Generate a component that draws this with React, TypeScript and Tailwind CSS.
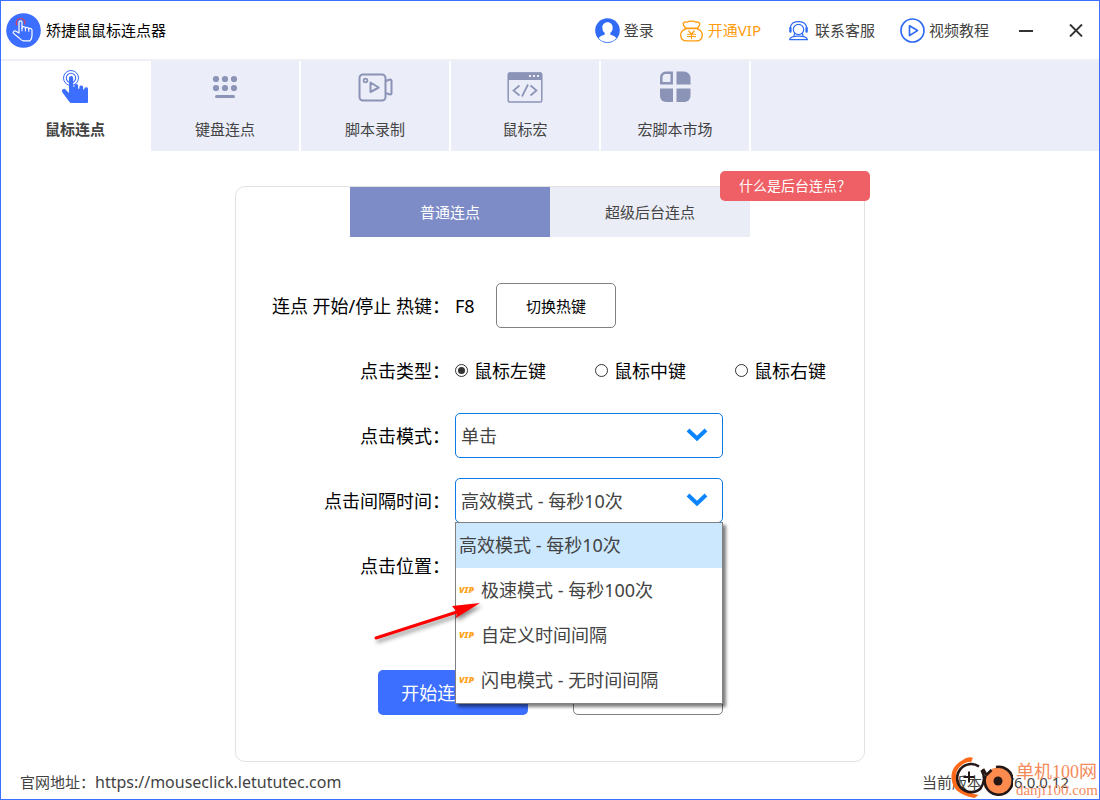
import { useState } from 'react';
import type { ReactNode } from 'react';

type TabKey = 'mouse' | 'keyboard' | 'record' | 'macro' | 'market';

interface Option {
  value: string;
  label: string;
  vip: boolean;
}

const intervalOptions: Option[] = [
  { value: 'normal', label: '高效模式 - 每秒10次', vip: false },
  { value: 'fast', label: '极速模式 - 每秒100次', vip: true },
  { value: 'custom', label: '自定义时间间隔', vip: true },
  { value: 'flash', label: '闪电模式 - 无时间间隔', vip: true },
];

const clickTypes = [
  { value: 'left', label: '鼠标左键' },
  { value: 'middle', label: '鼠标中键' },
  { value: 'right', label: '鼠标右键' },
];

function LogoIcon() {
  return (
    <svg viewBox="0 0 35 35" className="h-[35px] w-[35px]" fill="none">
      <circle cx="17.5" cy="17.5" r="17.3" fill="#3c6eff" />
      <path d="M11.2 12.4a4.300 4.300 0 1 1 7.400-1" stroke="#e0405a" strokeWidth="1.200" />
      <path
        d="M13 20V9.300a1.500 1.500 0 0 1 3 0v6.200q0-1.800 1.700-1.800t1.700 1.900q.2-1.300 1.700-1.200t1.700 1.800q.3-1 1.600-.8t1.600 1.600v5.500q0 3.300-2 5.300h-6.500q-2.500-.4-4.300-2.800l-5.700-4.600q-.8-1.200.2-2t2.300-.1z"
        stroke="#fff"
        strokeWidth="1.200"
        strokeLinecap="round"
        strokeLinejoin="round"
      />
      <path d="M16 15.500V18M19.400 15.600V18M22.800 16.200V18.500" stroke="#fff" strokeWidth="1" strokeLinecap="round" />
    </svg>
  );
}

function UserIcon() {
  return (
    <svg viewBox="0 0 25 25" className="h-[25px] w-[25px]">
      <circle cx="12.5" cy="12.5" r="12.3" fill="#2f6bf5" />
      <path
        d="M12.5 4.200c3.200 0 5.200 2.400 5.200 5.500 0 2.300-1 4.100-2.400 5.300v.9c0 .6.500.9 1.600 1.300 2.200.8 3.800 1.500 4.400 3a12 12 0 0 1-17.600 0c.6-1.500 2.200-2.200 4.400-3 1.100-.4 1.600-.7 1.600-1.300V15A7 7 0 0 1 7.300 9.700c0-3.100 2-5.500 5.200-5.500z"
        fill="#fff"
      />
    </svg>
  );
}

function MoneyIcon() {
  return (
    <svg viewBox="0 0 25 25" className="h-[25px] w-[25px]" fill="none" stroke="#ff9c0d" strokeWidth="1.300" strokeLinecap="round" strokeLinejoin="round">
      <path d="M6.500 10C5.200 8.600 4 7 4.200 5.200Q6 3.400 8.600 4.200Q10 2.500 12.500 3.300Q15 2.500 16.400 4.200Q19.200 3.400 20.800 5.400C21 7 19.800 8.600 18.500 10" />
      <path d="M6.200 10.400h12.600" strokeWidth="1.600" />
      <path d="M6.300 11.200C3.600 12.200 1.700 14.200 1.700 17c0 4 2.800 5.900 6.300 5.900h9c3.500 0 6.300-1.900 6.300-5.900 0-2.800-1.900-4.800-4.600-5.800" />
      <path d="M9.700 13l2.800 3 2.800-3M8.500 16.300h8M8.500 18.500h8M12.500 16v4.600" strokeWidth="1.100" />
    </svg>
  );
}

function ServiceIcon() {
  return (
    <svg viewBox="0 0 25 25" className="h-[25px] w-[25px]" fill="none" stroke="#2f6bf5" strokeWidth="1.200" strokeLinecap="round">
      <path d="M4.500 8.500C5.500 5.300 8.500 3.600 12.500 3.600s7 1.700 8 4.900" />
      <circle cx="12.500" cy="11.500" r="5.200" />
      <path d="M4.400 10v3.600M20.600 10v3.600" strokeWidth="2.400" />
      <path d="M8.800 15.300l-.8 2.200M16.200 15.300l.8 2.200" />
      <path d="M3.600 21.600c.4-2.400 3.300-3.500 8.900-3.500s8.500 1.100 8.900 3.500z" strokeLinejoin="round" />
    </svg>
  );
}

function PlayIcon() {
  return (
    <svg viewBox="0 0 25 25" className="h-[25px] w-[25px]" fill="none" stroke="#2f6bf5" strokeWidth="1.700" strokeLinejoin="round">
      <circle cx="12.500" cy="12.500" r="11.500" />
      <path d="M9.500 7.800l8 4.800-8 4.900z" />
    </svg>
  );
}

function TapIcon() {
  return (
    <svg viewBox="0 0 36 36" className="h-9 w-9" fill="none">
      <circle cx="14" cy="9" r="7.500" stroke="#3c6eff" strokeWidth="1" />
      <circle cx="14" cy="9" r="4.700" stroke="#3c6eff" strokeWidth="1.100" />
      <path
        d="M12 9.200a2.100 2.100 0 0 1 4.200 0v8.600h1.200v-1.300a1.900 1.900 0 0 1 3.700 0v3.300h1.300v-1.900a1.900 1.900 0 0 1 3.700 0v2.700h1.200v-.8a1.900 1.900 0 0 1 3.700 0V33a1 1 0 0 1-1 1H14.500q-1.500 0-2.200-1.300L5.300 23.300a2.100 2.100 0 0 1 3.600-2.400l3.100 3z"
        fill="#3c6eff"
      />
    </svg>
  );
}

function KeyboardIcon() {
  return (
    <svg viewBox="0 0 36 36" className="h-9 w-9" fill="#8b94b6">
      {[9, 18, 27].map((cx) => (
        <g key={cx}>
          <circle cx={cx} cy="10" r="3.100" />
          <circle cx={cx} cy="19" r="3.100" />
        </g>
      ))}
      <rect x="8" y="26" width="20" height="3" rx="1.500" />
    </svg>
  );
}

function RecordIcon() {
  return (
    <svg viewBox="0 0 36 36" className="h-9 w-9" fill="none" stroke="#8b94b6" strokeWidth="2" strokeLinejoin="round">
      <rect x="2.500" y="5.500" width="26" height="26" rx="3.500" />
      <path d="M28.500 12l4.500-1.500q1.500 0 1.500 1.500v12q0 1.500-1.500 1.500L28.500 24" />
      <circle cx="8.500" cy="11.500" r="1.900" strokeWidth="1.700" />
      <path d="M13.500 13.500v9.500l8.200-4.500z" />
    </svg>
  );
}

function MacroIcon() {
  return (
    <svg viewBox="0 0 36 36" className="h-9 w-9" fill="none" stroke="#8b94b6" strokeWidth="1.500">
      <rect x="1.200" y="4" width="33.600" height="29" rx="1.500" />
      <path d="M1 5a1.500 1.500 0 0 1 1.500-1.500h31A1.500 1.500 0 0 1 35 5v6H1z" fill="#8b94b6" stroke="none" />
      <path d="M12.500 16.500l-6 5 6 5M23.500 16.500l6 5-6 5M21 15.500l-6 12" strokeWidth="1.700" />
      <path d="M22 7h2M26 7h2M30 7h2" stroke="#ebedf9" strokeWidth="2" />
    </svg>
  );
}

function MarketIcon() {
  return (
    <svg viewBox="0 0 36 36" className="h-9 w-9" fill="#8b94b6">
      <path d="M8.500 3.800h6.200v10.400H4.300V8a4.200 4.200 0 0 1 4.200-4.200z" fill="none" stroke="#8b94b6" strokeWidth="2.500" />
      <path d="M19.500 2.500H27a6.500 6.500 0 0 1 6.500 6.500v6.500h-14z" />
      <path d="M3 19.500h13V33H9a6 6 0 0 1-6-6z" />
      <path d="M19.500 19.500h14V27a6 6 0 0 1-6 6h-8z" />
    </svg>
  );
}

function ChevronIcon() {
  return (
    <svg viewBox="0 0 22 14" className="pointer-events-none absolute top-[15px] right-[15px] h-[14px] w-[22px]" fill="none">
      <path d="M2 2l9 8.500L20 2" stroke="#0a84ff" strokeWidth="4" />
    </svg>
  );
}

const tabs: { key: TabKey; label: string; icon: ReactNode }[] = [
  { key: 'mouse', label: '鼠标连点', icon: <TapIcon /> },
  { key: 'keyboard', label: '键盘连点', icon: <KeyboardIcon /> },
  { key: 'record', label: '脚本录制', icon: <RecordIcon /> },
  { key: 'macro', label: '鼠标宏', icon: <MacroIcon /> },
  { key: 'market', label: '宏脚本市场', icon: <MarketIcon /> },
];

function HeaderLink({ icon, text, vip }: { icon: ReactNode; text: string; vip?: boolean }) {
  return (
    <a href="#" className={`flex items-center gap-1 ${vip ? 'text-[#ff9c0d]' : 'text-[#434343]'}`}>
      {icon}
      <span>{text}</span>
    </a>
  );
}

function Header() {
  return (
    <header className="flex h-[60px] items-center border-b-2 border-[#efeff6] pl-[5px]">
      <LogoIcon />
      <h1 className="ml-[5px] text-black">矫捷鼠鼠标连点器</h1>
      <nav className="ml-auto flex items-center gap-[25px]">
        <HeaderLink icon={<UserIcon />} text="登录" />
        <HeaderLink icon={<MoneyIcon />} text="开通VIP" vip />
        <HeaderLink icon={<ServiceIcon />} text="联系客服" />
        <HeaderLink icon={<PlayIcon />} text="视频教程" />
      </nav>
      <div className="ml-[14px] flex gap-1">
        <button aria-label="最小化" className="flex h-10 w-[46px] items-center justify-center">
          <svg viewBox="0 0 14 14" className="h-[14px] w-[14px]" stroke="#333" strokeWidth="2">
            <path d="M0 8h14" />
          </svg>
        </button>
        <button aria-label="关闭" className="flex h-10 w-[46px] items-center justify-center">
          <svg viewBox="0 0 14 14" className="h-[14px] w-[14px]" stroke="#333" strokeWidth="1.800">
            <path d="M1 1.500l12 12M13 1.500L1 13.500" />
          </svg>
        </button>
      </div>
    </header>
  );
}

function Row({ label, htmlFor, children }: { label: string; htmlFor?: string; children?: ReactNode }) {
  return (
    <div className="flex h-[45px] items-center gap-[5px]">
      <label htmlFor={htmlFor} className="w-[214px] shrink-0 text-right">
        {label}
      </label>
      {children}
    </div>
  );
}

function Watermark() {
  return (
    <div className="pointer-events-none absolute right-px bottom-0 flex items-end gap-[3px] text-[#f58a5a]">
      <svg viewBox="0 0 64 43" className="h-[43px] w-[64px]" fill="none">
        <path d="M22 1.500C9 4 2 12 2.500 22c.5 10 7 17 23 20l4-3C14 36 7.500 31 7 22 6.500 13 12 7 23 5z" fill="#ff6a1a" />
        <path d="M13 4.500Q19-.5 24 2l-2.500 4.500q-4-2.500-8.500-2z" fill="#ff6a1a" />
        <path d="M30 10.500a14 14 0 1 0 1.500 22q3-4 3.500-9.500 0-5-2.500-9" stroke="#241715" strokeWidth="2.600" />
        <path d="M20 15.500v11M14.500 21h11" stroke="#241715" strokeWidth="2" />
        <circle cx="49" cy="25" r="13.500" fill="#fd8b4d" />
        <path d="M47 11a14 14 0 1 1-10.500 9M34 13l3.500 6 5-5" stroke="#241715" strokeWidth="2.600" />
        <circle cx="49" cy="25" r="4.500" fill="#241715" />
      </svg>
      <div className="font-['Liberation_Serif','Noto_Sans_CJK_SC',serif]">
        <div className="text-[18px] leading-[18px]">单机100网</div>
        <div className="text-[15px] leading-[18px]">danji100.com</div>
      </div>
    </div>
  );
}

export default function App() {
  const [activeTab, setActiveTab] = useState<TabKey>('mouse');
  const [clickType, setClickType] = useState('left');
  const [interval, setInterval] = useState('normal');
  const [menuOpen, setMenuOpen] = useState(true);

  const current = intervalOptions.find((o) => o.value === interval);

  const selectInterval = (value: string) => {
    setInterval(value);
    setMenuOpen(false);
  };

  return (
    <div className="relative flex min-h-screen flex-col border border-[#3c6eff] bg-white font-['Noto_Sans','Noto_Sans_CJK_SC',sans-serif] text-[15px] leading-5 text-[#434343]">
      <Header />

      <nav className="flex h-[90px] gap-[2px]">
        {tabs.map((tab) => (
          <button
            key={tab.key}
            onClick={() => setActiveTab(tab.key)}
            className={`flex w-[148px] flex-col items-center gap-[14px] pt-2 ${
              tab.key === activeTab ? 'bg-white font-bold' : 'bg-[#ebedf9]'
            }`}
          >
            {tab.icon}
            <span>{tab.label}</span>
          </button>
        ))}
        <div className="flex-1 bg-[#ebedf9]" />
      </nav>

      <main className="flex-1 pt-[35px]">
        <section className="relative mx-auto w-[630px] rounded-[10px] border border-[#e2e2e2] pb-[46px]">
          <div className="flex justify-center">
            <button className="h-[50px] w-[200px] bg-[#7d8bc6] text-white">普通连点</button>
            <button className="h-[50px] w-[200px] bg-[#ebedf6]">超级后台连点</button>
          </div>
          <button className="absolute -top-4 -right-[6px] h-[30px] w-[150px] rounded-[5px] bg-[#ee6065] text-sm text-white">
            什么是后台连点？
          </button>

          <form className="flex flex-col gap-5 pt-[46px] text-[18px] leading-6 text-black" onSubmit={(e) => e.preventDefault()}>
            <Row label="连点 开始/停止 热键：">
              <span className="w-9">F8</span>
              <button type="button" className="h-[45px] w-[120px] rounded-[5px] border border-[#808080] text-[15px]">
                切换热键
              </button>
            </Row>

            <Row label="点击类型：">
              {clickTypes.map((type) => (
                <label key={type.value} className="flex w-[135px] shrink-0 items-center gap-[6px]">
                  <input
                    type="radio"
                    name="clickType"
                    checked={clickType === type.value}
                    onChange={() => setClickType(type.value)}
                    className="h-[13px] w-[13px] appearance-none rounded-full border border-[#333] bg-white bg-clip-content p-[2px] checked:bg-[#333]"
                  />
                  {type.label}
                </label>
              ))}
            </Row>

            <Row label="点击模式：" htmlFor="mode">
              <div className="relative">
                <select
                  id="mode"
                  className="h-[45px] w-[268px] appearance-none rounded-[5px] border border-[#0a7be6] bg-white pl-[5px] text-[#434343]"
                >
                  <option>单击</option>
                </select>
                <ChevronIcon />
              </div>
            </Row>

            <Row label="点击间隔时间：" htmlFor="interval">
              <div className="relative">
                <button
                  id="interval"
                  type="button"
                  role="combobox"
                  aria-expanded={menuOpen}
                  aria-controls="interval-menu"
                  onClick={() => setMenuOpen(!menuOpen)}
                  className="block h-[45px] w-[268px] rounded-[5px] border border-[#0a7be6] bg-white pl-[5px] text-left text-[#434343]"
                >
                  {current?.label}
                </button>
                <ChevronIcon />
                {menuOpen && (
                  <ul
                    id="interval-menu"
                    role="listbox"
                    className="absolute top-11 left-0 z-10 w-[268px] border border-[#808080] bg-white text-[#434343] shadow-[3px_3px_3px_rgba(0,0,0,0.5)]"
                  >
                    {intervalOptions.map((option) => (
                      <li
                        key={option.value}
                        role="option"
                        aria-selected={option.value === interval}
                        onClick={() => selectInterval(option.value)}
                        className={`flex h-[45px] items-center pb-[2px] pl-[3px] ${option.value === interval ? 'bg-[#cce8ff]' : ''}`}
                      >
                        {option.vip && (
                          <span className="w-[22px] text-[9px] leading-3 font-black text-[#ffa31a] italic">VIP</span>
                        )}
                        {option.label}
                      </li>
                    ))}
                  </ul>
                )}
                {/* pointer to the VIP mode */}
                <svg
                  viewBox="0 0 112 46"
                  className="pointer-events-none absolute top-[120px] -left-[82px] z-20 h-[46px] w-[112px] drop-shadow-[2px_3px_2px_rgba(0,0,0,0.45)]"
                >
                  <path d="M3 40L84 14" stroke="#f00" strokeWidth="3" strokeLinecap="round" />
                  <path d="M107 5L83 20L84 14L79 8z" fill="#f00" />
                </svg>
              </div>
            </Row>

            <Row label="点击位置：" />

            <div className="flex justify-center gap-[45px] pt-[62px]">
              <button className="h-[45px] w-[150px] rounded-[5px] bg-[#3c6eff] text-white">开始连点(F8)</button>
              <button type="button" aria-label="停止连点" className="h-[45px] w-[150px] rounded-[5px] border border-[#808080] bg-white" />
            </div>
          </form>
        </section>
      </main>

      <footer className="relative flex h-[37px] items-center justify-between pt-[3px] pr-[30px] pl-[19px]">
        <span>
          官网地址：
          <a href="https://mouseclick.letututec.com" className="text-base leading-5">
            https://mouseclick.letututec.com
          </a>
        </span>
        <span className="flex gap-2">
          <span>当前版本：</span>
          <span>V6.0.0.12</span>
        </span>
        <Watermark />
      </footer>
    </div>
  );
}
